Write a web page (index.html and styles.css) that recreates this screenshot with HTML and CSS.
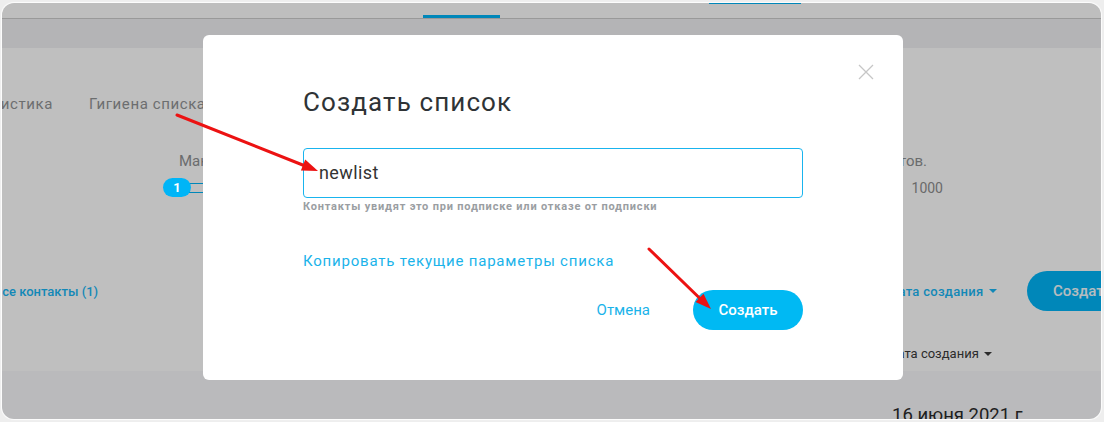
FILE: index.html
```html
<!DOCTYPE html>
<html lang="ru">
<head>
<meta charset="utf-8">
<title>Создать список</title>
<link rel="stylesheet" href="styles.css">
</head>
<body>
<div class="window">
  <div class="topbar">
    <div class="tab-indicator"></div>
    <div class="top-btn"></div>
  </div>
  <div class="subbar"></div>
  <div class="main">
    <nav class="navtabs">
      <span class="nav-item first">Статистика</span>
      <span class="nav-item">Гигиена списка</span>
    </nav>
    <div class="slider-title">
      <span>Максимальное количество</span>
      <span>контактов.</span>
    </div>
    <div class="slider">
      <span class="handle">1</span>
      <span class="track"></span>
      <span class="max">1000</span>
    </div>
    <div class="actions">
      <a class="all-link">Все контакты (1)</a>
      <span class="spacer"></span>
      <a class="sort">Дата создания <span class="caret"></span></a>
      <span class="btn-bg">Создать список</span>
    </div>
    <div class="table-head">
      <span class="th">Дата создания <span class="caret dark"></span></span>
    </div>
  </div>
  <div class="bottom">
    <span class="date">16 июня 2021 г.</span>
  </div>

  <div class="overlay"></div>

  <div class="modal">
    <button class="close" aria-label="Закрыть">
      <svg width="16" height="16" viewBox="0 0 16 16"><path d="M1 1L15 15M15 1L1 15" stroke="#c6c6c6" stroke-width="1.3" fill="none"/></svg>
    </button>
    <h2 class="title">Создать список</h2>
    <div class="field">newlist</div>
    <div class="hint">Контакты увидят это при подписке или отказе от подписки</div>
    <a class="copy-link">Копировать текущие параметры списка</a>
    <div class="modal-actions">
      <a class="cancel">Отмена</a>
      <button class="create">Создать</button>
    </div>
  </div>
</div>

<svg class="annot" width="1104" height="422" viewBox="0 0 1104 422">
  <line x1="177" y1="115" x2="304" y2="165.5" stroke="#ec1212" stroke-width="3" stroke-linecap="round"/>
  <polygon points="318,171 305.2,159.6 300.9,170.5" fill="#ec1212"/>
  <line x1="649" y1="249" x2="700" y2="298.5" stroke="#ec1212" stroke-width="3" stroke-linecap="round"/>
  <polygon points="711,309 703.5,293.8 695.5,302" fill="#ec1212"/>
</svg>
</body>
</html>
```
FILE: styles.css
```css
* { box-sizing: border-box; }
html, body { margin: 0; padding: 0; }
body {
  width: 1104px;
  height: 422px;
  background: #eeeeee;
  font-family: Roboto, "Noto Sans", "Liberation Sans", sans-serif;
  overflow: hidden;
}
.window {
  position: relative;
  margin: 3px 0 0 2px;
  width: 1099px;
  height: 416px;
  border-radius: 12px;
  overflow: hidden;
  background: #ffffff;
  box-shadow: 0 0 1px 1px rgba(255,255,255,0.9);
}
.topbar {
  height: 16px;
  background: #fefefe;
  border-bottom: 1px solid #cdcdcd;
  display: flex;
  padding-left: 421px;
}
.tab-indicator {
  align-self: flex-end;
  width: 77px;
  height: 3px;
  background: #00b5f7;
}
.top-btn {
  align-self: flex-start;
  margin-left: 209px;
  width: 92px;
  height: 1px;
  background: #00b5f7;
}
.subbar {
  height: 29px;
  background: #f0f1f3;
}
.main {
  height: 323px;
  background: #ffffff;
  padding-top: 47px;
  overflow: hidden;
}
.navtabs {
  display: flex;
  gap: 36px;
  font-size: 15px;
  line-height: 18px;
  letter-spacing: 0.6px;
  color: #919395;
}
.nav-item.first {
  width: 120px;
  margin-left: -69px;
  text-align: right;
  flex-shrink: 0;
}
.slider-title {
  display: flex;
  justify-content: space-between;
  margin: 39px 0 0 177px;
  width: 748px;
  font-size: 15px;
  line-height: 18px;
  color: #8e9092;
}
.slider {
  display: flex;
  align-items: center;
  margin: 8px 0 0 161px;
  width: 780px;
  height: 19px;
}
.handle {
  width: 28px;
  height: 19px;
  border-radius: 10px;
  background: #00b5f7;
  color: #ffffff;
  font-size: 13px;
  font-weight: 700;
  line-height: 19px;
  text-align: center;
  flex-shrink: 0;
  position: relative;
  z-index: 1;
}
.track {
  flex: 1;
  height: 10px;
  margin-left: -2px;
  border: 1px solid #00b5f7;
  background: #ffffff;
}
.max {
  margin-left: 24px;
  font-size: 14px;
  color: #8e8e8e;
}
.actions {
  display: flex;
  align-items: center;
  margin-top: 74px;
  height: 40px;
  margin-right: -86px;
}
.all-link {
  margin-left: -8px;
  font-size: 13px;
  font-weight: 500;
  color: #19b6f5;
}
.spacer { flex: 1; }
.sort {
  font-size: 13px;
  font-weight: 500;
  letter-spacing: 0.3px;
  color: #19b6f5;
}
.caret {
  display: inline-block;
  width: 0;
  height: 0;
  border-left: 4px solid transparent;
  border-right: 4px solid transparent;
  border-top: 4px solid #19b6f5;
  vertical-align: middle;
  margin-left: 2px;
  margin-top: -2px;
}
.caret.dark { border-top-color: #3a3a3a; }
.btn-bg {
  margin-left: 30px;
  height: 40px;
  width: 160px;
  border-radius: 20px;
  background: #00b5f7;
  color: #f4fbff;
  font-size: 15px;
  font-weight: 500;
  line-height: 40px;
  padding-left: 26px;
  white-space: nowrap;
  overflow: hidden;
  flex-shrink: 0;
}
.table-head {
  display: flex;
  justify-content: flex-end;
  margin-top: 35px;
  padding-right: 109px;
}
.th {
  font-size: 13px;
  line-height: 16px;
  color: #3a3a3a;
}
.bottom {
  height: 48px;
  background: #f8f9fb;
  padding: 33px 0 0 890px;
}
.date {
  display: block;
  font-size: 18.5px;
  line-height: 22px;
  color: #2a2a2a;
  white-space: nowrap;
}
.overlay {
  position: absolute;
  inset: 0;
  background: rgba(0,0,0,0.25);
}
.modal {
  position: absolute;
  left: 201px;
  top: 32px;
  width: 700px;
  height: 345px;
  background: #ffffff;
  border-radius: 6px;
  padding: 52px 100px 0 100px;
}
.close {
  position: absolute;
  right: 29px;
  top: 29px;
  width: 16px;
  height: 16px;
  padding: 0;
  border: 0;
  background: none;
  display: block;
}
.close svg { display: block; }
.title {
  margin: 0;
  font-size: 26px;
  line-height: 30px;
  font-weight: 400;
  color: #2f3336;
  letter-spacing: 1.1px;
}
.field {
  margin-top: 31px;
  height: 50px;
  border: 1px solid #19b4ee;
  border-radius: 4px;
  padding-left: 15px;
  font-size: 18px;
  line-height: 48px;
  letter-spacing: 0.4px;
  color: #333333;
}
.hint {
  margin-top: 2px;
  font-size: 11px;
  line-height: 14px;
  font-weight: 700;
  letter-spacing: 0.8px;
  color: #9a9ea2;
}
.copy-link {
  display: block;
  margin-top: 38px;
  font-size: 15px;
  line-height: 18px;
  letter-spacing: 0.8px;
  color: #1ab3ea;
}
.modal-actions {
  display: flex;
  justify-content: flex-end;
  align-items: center;
  gap: 43px;
  margin-top: 20px;
}
.cancel {
  font-size: 15px;
  color: #1ab3ea;
}
.create {
  width: 110px;
  height: 40px;
  border: 0;
  border-radius: 20px;
  background: #00b9f3;
  color: #ffffff;
  font-family: inherit;
  font-size: 15px;
  font-weight: 500;
  padding: 0;
}
.annot {
  position: absolute;
  left: 0;
  top: 0;
  pointer-events: none;
}
```
